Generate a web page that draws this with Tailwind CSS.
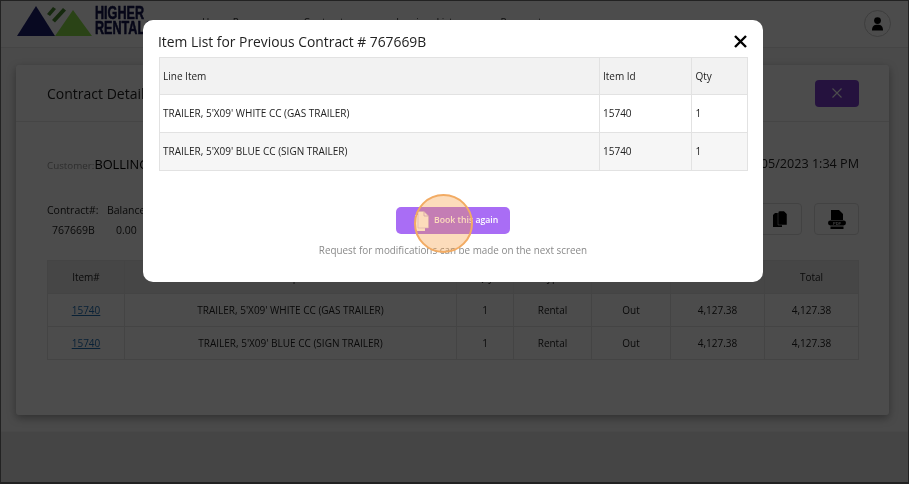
<!DOCTYPE html>
<html lang="en">
<head>
<meta charset="utf-8">
<title>Contract Details</title>
<script src="https://cdn.jsdelivr.net/npm/@tailwindcss/browser@4"></script>
</head>
<body class="relative w-[909px] h-[484px] overflow-hidden bg-white font-['Open_Sans',sans-serif] text-[#222]">
<div class="flex flex-col h-[484px] blur-[0.4px]">
  <header class="h-[48px] shrink-0 flex items-center bg-white border-b border-[#e8e8e8] pl-4 pr-[18px]">
    <div class="flex w-[134px] h-[32px] shrink-0 -mt-[5px]">
      <svg width="78" height="32" viewBox="0 0 78 32" class="shrink-0">
        <path d="M1 31 L20 1 L39 31 Z" fill="#1c1e70"/>
        <path d="M39 31 L57 5 L76 31 Z" fill="#8ee04c"/>
        <path d="M31 9 L37 2 L40 4 L34 11 Z" fill="#4a8a30"/>
        <path d="M36 15 L47 3 L50 5.5 L39 17.5 Z" fill="#4a8a30"/>
      </svg>
      <div class="flex flex-col ml-px mt-px font-['Liberation_Sans',sans-serif] font-bold text-[18px] leading-[15px] text-[#14164e] [-webkit-text-stroke:0.6px_#14164e] scale-x-[0.7] origin-left">
        <span>HIGHER</span><span>RENTALS</span>
      </div>
    </div>
    <nav class="flex gap-[48px] ml-[52px] -mt-[2px] text-[10px] text-[#333]">
      <span>Home Page</span><span>Contracts</span><span>Invoices List</span><span>Payments</span>
    </nav>
    <div class="ml-auto w-[27px] h-[27px] rounded-full border border-[#ccc] flex items-center justify-center">
      <svg width="13" height="14" viewBox="0 0 13 14"><circle cx="6.5" cy="3.6" r="3.4" fill="#000"/><path d="M1 13.5 C1 9 3 7.8 6.5 7.8 S12 9 12 13.5 Z" fill="#000"/></svg>
    </div>
  </header>
  <main class="flex-1 bg-[#f7f7f7] pt-[17px] pl-4 pr-5 h-[383px]">
    <section class="h-[350px] bg-white rounded-[3px] shadow-[0_3px_8px_rgba(0,0,0,0.35)]">
      <div class="h-[57px] flex items-center justify-between pl-[31px] pr-[30px] border-b border-[#e6e6e6]">
        <h2 class="text-[14px] font-normal">Contract Details</h2>
        <button class="w-[44px] h-[27px] rounded-[4px] bg-[#7c3fd0] flex items-center justify-center">
          <svg width="10" height="10" viewBox="0 0 10 10"><path d="M0.5 0.5 L9.5 9.5 M9.5 0.5 L0.5 9.5" stroke="#fff" stroke-width="1.1"/></svg>
        </button>
      </div>
      <div class="pl-[31px] pr-[30px]">
        <div class="flex justify-between items-center h-[27px] mt-[29px]">
          <div class="flex items-baseline"><span class="text-[9.8px] text-[#999]">Customer:</span><span class="text-[12.8px] text-black">BOLLING CONSTRUCTION</span></div>
          <span class="text-[12.6px] text-[#222]">01/05/2023 1:34 PM</span>
        </div>
        <div class="flex justify-between h-[32px] mt-[25px]">
          <div class="grid grid-cols-[60px_60px] text-[10.5px] leading-[20px] -mt-[3px]">
            <span>Contract#:</span><span>Balance</span>
            <span class="pl-[5px]">767669B</span><span class="pl-[9px]">0.00</span>
          </div>
          <div class="flex gap-[12px]">
            <button class="w-[45px] h-[32px] rounded-[4px] border border-[#ddd] flex items-center justify-center">
              <svg width="14" height="16" viewBox="0 0 14 16"><path d="M2 2 H6 V14 H9 V16 H0 V4 Z" fill="#000"/><path d="M6 0 H11 L14 3 V14 H5 V2 Z" fill="#000" stroke="#fff" stroke-width="0.5"/></svg>
            </button>
            <button class="w-[45px] h-[32px] rounded-[4px] border border-[#ddd] flex items-center justify-center">
              <svg width="18" height="19" viewBox="0 0 18 19"><path d="M3 0 H11 L15 4 V10 H3 Z" fill="#000"/><rect x="0" y="10.5" width="18" height="5" rx="2.4" fill="#000"/><text x="9" y="14.6" text-anchor="middle" font-size="4" font-weight="700" font-family="'Liberation Sans',sans-serif" fill="#ccc">PDF</text><rect x="2.5" y="16.5" width="13" height="2.5" fill="#000"/></svg>
            </button>
          </div>
        </div>
        <table class="w-[811px] table-fixed border-collapse text-[10px] text-center mt-[25px]">
          <colgroup><col class="w-[77px]"><col class="w-[332px]"><col class="w-[57px]"><col class="w-[78px]"><col class="w-[79px]"><col class="w-[94px]"><col class="w-[94px]"></colgroup>
          <thead>
            <tr class="h-[33px] bg-[#ececec]">
              <th class="font-normal border border-[#e4e4e4]">Item#</th><th class="font-normal border border-[#e4e4e4]">Description</th><th class="font-normal border border-[#e4e4e4]">Qty</th><th class="font-normal border border-[#e4e4e4]">Type</th><th class="font-normal border border-[#e4e4e4]">Status</th><th class="font-normal border border-[#e4e4e4]">Price</th><th class="font-normal border border-[#e4e4e4]">Total</th>
            </tr>
          </thead>
          <tbody>
            <tr class="h-[33px]">
              <td class="border border-[#e4e4e4]"><a class="text-[#1f6fb5] underline">15740</a></td><td class="border border-[#e4e4e4]">TRAILER, 5'X09' WHITE CC (GAS TRAILER)</td><td class="border border-[#e4e4e4]">1</td><td class="border border-[#e4e4e4]">Rental</td><td class="border border-[#e4e4e4]">Out</td><td class="border border-[#e4e4e4]">4,127.38</td><td class="border border-[#e4e4e4]">4,127.38</td>
            </tr>
            <tr class="h-[33px]">
              <td class="border border-[#e4e4e4]"><a class="text-[#1f6fb5] underline">15740</a></td><td class="border border-[#e4e4e4]">TRAILER, 5'X09' BLUE CC (SIGN TRAILER)</td><td class="border border-[#e4e4e4]">1</td><td class="border border-[#e4e4e4]">Rental</td><td class="border border-[#e4e4e4]">Out</td><td class="border border-[#e4e4e4]">4,127.38</td><td class="border border-[#e4e4e4]">4,127.38</td>
            </tr>
          </tbody>
        </table>
      </div>
    </section>
  </main>
  <footer class="h-[53px] shrink-0 bg-[#e8e8e8] border-t border-[#f2f2f2]"></footer>
</div>

<div class="absolute inset-0 bg-black/70 border border-b-2 border-[#222]"></div>

<div class="absolute left-[143px] top-[20px] w-[620px] h-[262px] bg-white rounded-[10px] blur-[0.3px]">
  <div class="flex items-center justify-between h-[37px] pl-[15px] pr-[16px] pt-[6px]">
    <h1 class="text-[13.85px] font-normal text-[#222] mt-px">Item List for Previous Contract # 767669B</h1>
    <svg width="13" height="13" viewBox="0 0 13 13"><path d="M1 1 L12 12 M12 1 L1 12" stroke="#000" stroke-width="2.4"/></svg>
  </div>
  <table class="ml-[15.5px] w-[588px] table-fixed border-collapse text-[10px] text-[#222]">
    <colgroup><col class="w-[440px]"><col class="w-[92px]"><col class="w-[56px]"></colgroup>
    <thead>
      <tr class="h-[37px] bg-[#f2f2f2]">
        <th class="font-normal text-left pl-[3.5px] border border-[#e2e2e2]">Line Item</th><th class="font-normal text-left pl-[3.5px] border border-[#e2e2e2]">Item Id</th><th class="font-normal text-left pl-[4px] border border-[#e2e2e2]">Qty</th>
      </tr>
    </thead>
    <tbody>
      <tr class="h-[38px]">
        <td class="pl-[3.5px] border border-[#e2e2e2]">TRAILER, 5'X09' WHITE CC (GAS TRAILER)</td><td class="pl-[3.5px] border border-[#e2e2e2]">15740</td><td class="pl-[4px] border border-[#e2e2e2]">1</td>
      </tr>
      <tr class="h-[38px] bg-[#f6f6f6]">
        <td class="pl-[3.5px] border border-[#e2e2e2]">TRAILER, 5'X09' BLUE CC (SIGN TRAILER)</td><td class="pl-[3.5px] border border-[#e2e2e2]">15740</td><td class="pl-[4px] border border-[#e2e2e2]">1</td>
      </tr>
    </tbody>
  </table>
  <div class="flex flex-col items-center mt-[36px]">
    <button class="w-[114px] h-[27px] rounded-[5px] bg-[#a96df5] flex items-center pl-[18px] text-white text-[8.7px] font-semibold">
      <svg width="15" height="20" viewBox="0 0 15 20" class="mr-[5px]"><path d="M1 4 H5 V17 H11 V20 H1 Z" fill="#fff"/><path d="M4 0.5 H10 L14.5 5 V17 H4 Z" fill="#fff" stroke="#c9b0e8" stroke-width="0.6"/><path d="M10 0.5 V5 H14.5" fill="none" stroke="#b79ad8" stroke-width="0.7"/></svg>
      Book this again
    </button>
    <p class="mt-[9px] text-[9.9px] text-[#8a8a8a]">Request for modifications can be made on the next screen</p>
  </div>
</div>

<div class="absolute left-[414px] top-[194px] w-[59px] h-[59px] rounded-full border-2 border-[#f2ab63] bg-[#f59a3c]/35"></div>
</body>
</html>
